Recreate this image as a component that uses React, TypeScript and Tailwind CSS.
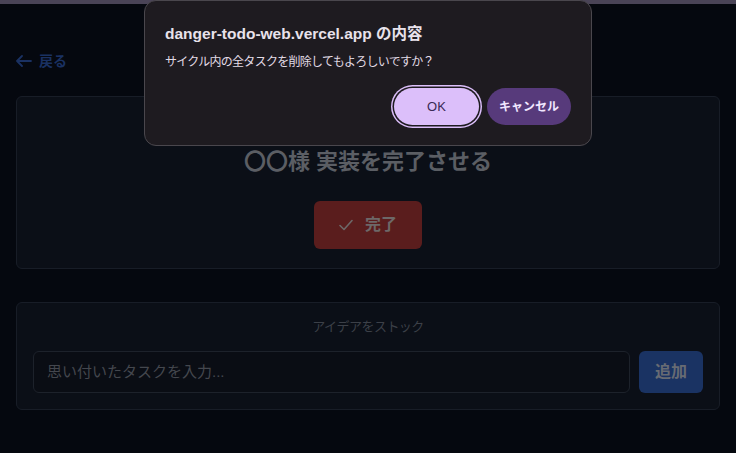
import React from "react";

export default function App() {
  return (
    <div
      className="relative min-h-screen w-full bg-[#05080f] overflow-hidden"
      style={{ fontFamily: '"Liberation Sans", "Noto Sans CJK JP", sans-serif' }}
    >
      <div className="h-[4px] w-full bg-[#4a4457]" />
      <main className="px-4 pt-[47px]">
        <a className="flex h-5 items-center gap-[7px] text-sm font-bold text-[#1a3162]">
          <svg width="16" height="12" viewBox="0 0 16 12" fill="none" stroke="currentColor" strokeWidth="1.8" strokeLinecap="round" strokeLinejoin="round">
            <path d="M6 1 L1 6 L6 11 M1 6 H15" />
          </svg>
          <span>戻る</span>
        </a>

        <section className="mt-[25px] rounded-md border border-[#181d27] bg-[#0b0f17] pt-[49px] pb-[19px] flex flex-col items-center">
          <h2 className="text-[22px] leading-8 font-bold text-[#5b5e64]">〇〇様 実装を完了させる</h2>
          <button className="mt-[23px] flex h-12 w-[108px] items-center justify-center gap-3 rounded-md bg-[#5a1d1d] text-base font-bold text-[#6d6868]">
            <svg width="14" height="12" viewBox="0 0 14 12" fill="none" stroke="currentColor" strokeWidth="1.6" strokeLinecap="round" strokeLinejoin="round">
              <path d="M1 6.5 L5 10.5 L13 1.5" />
            </svg>
            <span>完了</span>
          </button>
        </section>

        <section className="mt-[33px] rounded-md border border-[#181d27] bg-[#0b0f17] p-4">
          <p className="text-center text-[13px] leading-4 tracking-[-0.04em] text-[#3c4048]">アイデアをストック</p>
          <div className="mt-4 flex gap-[9px]">
            <div className="flex h-[42px] flex-1 items-center rounded-md border border-[#1d222b] bg-[#0a0d14] px-[13px]">
              <span className="text-[15px] text-[#44474e]">思い付いたタスクを入力...</span>
            </div>
            <button className="flex h-[42px] w-16 items-center justify-center rounded-md bg-[#1a3363] text-base font-bold text-[#676b73]">
              追加
            </button>
          </div>
        </section>
      </main>

      <div className="absolute left-[144px] top-0 h-[146px] w-[448px] rounded-xl border border-[#4a474d] bg-[#1e1b20] px-5 pt-[23px]">
        <h1 className="text-[15.5px] leading-5 font-bold text-[#e8e2eb]">danger-todo-web.vercel.app の内容</h1>
        <p className="mt-[9px] text-[12px] leading-[18px] tracking-[-0.06em] text-[#e2dce6]">
          サイクル内の全タスクを削除してもよろしいですか？
        </p>
        <div className="mt-[17px] flex justify-end gap-2">
          <button className="flex h-[37px] w-[85px] items-center justify-center rounded-full bg-[#dcbffa] text-[13px] font-medium text-[#3a2a56] shadow-[0_0_0_1.5px_#1e1b20,0_0_0_3px_#dcbffa]">
            OK
          </button>
          <button className="flex h-[37px] w-[84px] items-center justify-center rounded-full bg-[#573a7b] text-[12px] font-bold text-[#f1e6ff]">
            キャンセル
          </button>
        </div>
      </div>
    </div>
  );
}
